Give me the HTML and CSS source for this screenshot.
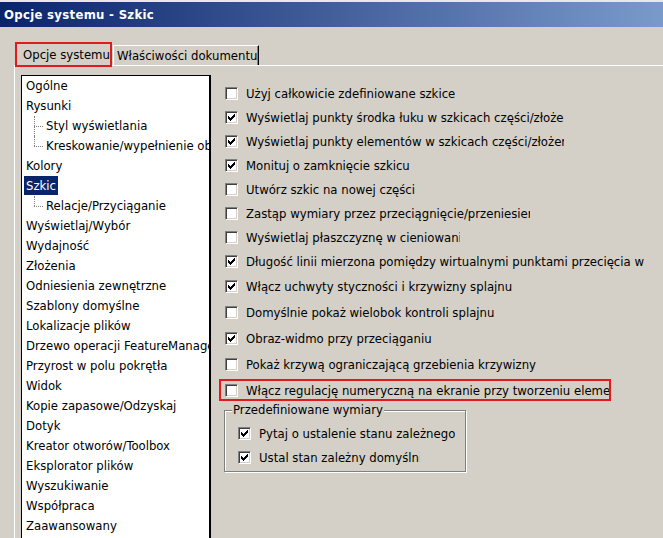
FILE: index.html
```html
<!DOCTYPE html>
<html lang="pl">
<head>
    <meta charset="UTF-8">
    <title>Opcje systemu - Szkic</title>
    <link rel="stylesheet" href="styles.css">
</head>
<body>
<div class="window">
    <div class="titlebar">Opcje systemu - Szkic</div>
    <div class="content">
        <div class="tabs">
            <div class="tab active">Opcje systemu</div>
            <div class="tab">Właściwości dokumentu</div>
        </div>
        <div class="panel">
            <ul class="tree">
                <li><span>Ogólne</span></li>
                <li><span>Rysunki</span></li>
                <li class="sub"><span>Styl wyświetlania</span></li>
                <li class="sub last"><span>Kreskowanie/wypełnienie obszaru</span></li>
                <li><span>Kolory</span></li>
                <li class="selected"><span>Szkic</span></li>
                <li class="sub last"><span>Relacje/Przyciąganie</span></li>
                <li><span>Wyświetlaj/Wybór</span></li>
                <li><span>Wydajność</span></li>
                <li><span>Złożenia</span></li>
                <li><span>Odniesienia zewnętrzne</span></li>
                <li><span>Szablony domyślne</span></li>
                <li><span>Lokalizacje plików</span></li>
                <li><span>Drzewo operacji FeatureManager</span></li>
                <li><span>Przyrost w polu pokrętła</span></li>
                <li><span>Widok</span></li>
                <li><span>Kopie zapasowe/Odzyskaj</span></li>
                <li><span>Dotyk</span></li>
                <li><span>Kreator otworów/Toolbox</span></li>
                <li><span>Eksplorator plików</span></li>
                <li><span>Wyszukiwanie</span></li>
                <li><span>Współpraca</span></li>
                <li><span>Zaawansowany</span></li>
            </ul>

            <div class="options">
                <div class="checks">
                    <div class="check"><span class="box"></span><span class="label">Użyj całkowicie zdefiniowane szkice</span></div>
                    <div class="check"><span class="box"><svg class="tick" viewBox="0 0 7 7"><path d="M0 2h1v3H0zM1 3h1v3H1zM2 4h1v3H2zM3 3h1v3H3zM4 2h1v3H4zM5 1h1v3H5zM6 0h1v3H6z"/></svg></span><span class="label cut-318">Wyświetlaj punkty środka łuku w szkicach części/złożeniach</span></div>
                    <div class="check"><span class="box"><svg class="tick" viewBox="0 0 7 7"><path d="M0 2h1v3H0zM1 3h1v3H1zM2 4h1v3H2zM3 3h1v3H3zM4 2h1v3H4zM5 1h1v3H5zM6 0h1v3H6z"/></svg></span><span class="label cut-318">Wyświetlaj punkty elementów w szkicach części/złożeniach</span></div>
                    <div class="check"><span class="box"><svg class="tick" viewBox="0 0 7 7"><path d="M0 2h1v3H0zM1 3h1v3H1zM2 4h1v3H2zM3 3h1v3H3zM4 2h1v3H4zM5 1h1v3H5zM6 0h1v3H6z"/></svg></span><span class="label">Monituj o zamknięcie szkicu</span></div>
                    <div class="check"><span class="box"></span><span class="label">Utwórz szkic na nowej części</span></div>
                    <div class="check"><span class="box"></span><span class="label cut-284">Zastąp wymiary przez przeciągnięcie/przeniesienie</span></div>
                    <div class="check"><span class="box"></span><span class="label cut-214">Wyświetlaj płaszczyznę w cieniowaniu</span></div>
                    <div class="check"><span class="box"><svg class="tick" viewBox="0 0 7 7"><path d="M0 2h1v3H0zM1 3h1v3H1zM2 4h1v3H2zM3 3h1v3H3zM4 2h1v3H4zM5 1h1v3H5zM6 0h1v3H6z"/></svg></span><span class="label">Długość linii mierzona pomiędzy wirtualnymi punktami przecięcia w</span></div>
                </div>
                <div class="checks loose">
                    <div class="check"><span class="box"><svg class="tick" viewBox="0 0 7 7"><path d="M0 2h1v3H0zM1 3h1v3H1zM2 4h1v3H2zM3 3h1v3H3zM4 2h1v3H4zM5 1h1v3H5zM6 0h1v3H6z"/></svg></span><span class="label">Włącz uchwyty styczności i krzywizny splajnu</span></div>
                    <div class="check"><span class="box"></span><span class="label">Domyślnie pokaż wielobok kontroli splajnu</span></div>
                    <div class="check"><span class="box"><svg class="tick" viewBox="0 0 7 7"><path d="M0 2h1v3H0zM1 3h1v3H1zM2 4h1v3H2zM3 3h1v3H3zM4 2h1v3H4zM5 1h1v3H5zM6 0h1v3H6z"/></svg></span><span class="label">Obraz-widmo przy przeciąganiu</span></div>
                    <div class="check"><span class="box"></span><span class="label">Pokaż krzywą ograniczającą grzebienia krzywizny</span></div>
                    <div class="check marked"><span class="box"></span><span class="label">Włącz regulację numeryczną na ekranie przy tworzeniu elementów</span></div>
                </div>

                <div class="group">
                    <div class="legend">Przedefiniowane wymiary</div>
                    <div class="check"><span class="box"><svg class="tick" viewBox="0 0 7 7"><path d="M0 2h1v3H0zM1 3h1v3H1zM2 4h1v3H2zM3 3h1v3H3zM4 2h1v3H4zM5 1h1v3H5zM6 0h1v3H6z"/></svg></span><span class="label">Pytaj o ustalenie stanu zależnego</span></div>
                    <div class="check"><span class="box"><svg class="tick" viewBox="0 0 7 7"><path d="M0 2h1v3H0zM1 3h1v3H1zM2 4h1v3H2zM3 3h1v3H3zM4 2h1v3H4zM5 1h1v3H5zM6 0h1v3H6z"/></svg></span><span class="label cut-161">Ustal stan zależny domyślnie</span></div>
                </div>
            </div>
        </div>
    </div>
</div>
</body>
</html>
```

FILE: styles.css
```css
body {
    margin: 0;
    background: #d4d0c8;
    font-family: "DejaVu Sans Condensed", "DejaVu Sans", sans-serif;
    font-size: 13px;
    color: #000;
    overflow: hidden;
}
.window {
    width: 663px;
    height: 538px;
    overflow: hidden;
    border-top: 2px solid #eae8e3;
    box-sizing: border-box;
}
.titlebar {
    height: 25px;
    line-height: 25px;
    padding-left: 4px;
    background: linear-gradient(to right, #0a246a, #7a9acb);
    color: #fff;
    font-weight: bold;
    letter-spacing: 0.3px;
}
.content {
    padding: 15px 0 0 14px;
}

/* tabs */
.tabs {
    display: flex;
    align-items: flex-end;
    height: 23px;
}
.tab {
    box-sizing: border-box;
    height: 20px;
    line-height: 19px;
    margin-left: 1px;
    padding-left: 3px;
    width: 146px;
    border-top: 1px solid #fff;
    border-left: 1px solid #fff;
    border-right: 1px solid #000;
    box-shadow: inset -1px 0 0 #808080;
    white-space: nowrap;
}
.tab.active {
    position: relative;
    z-index: 1;
    width: 97px;
    height: 25px;
    line-height: 21px;
    margin-bottom: -2px;
    padding-left: 6px;
    border: 2px solid #e01b1b;
    box-shadow: none;
    background: #d4d0c8;
}

.panel {
    display: flex;
    align-items: flex-start;
    border-top: 1px solid #fff;
    border-left: 1px solid #fff;
    padding: 9px 0 0 6px;
}

/* tree list */
.tree {
    list-style: none;
    margin: 0;
    padding: 0;
    width: 190px;
    height: 475px;
    box-sizing: border-box;
    border: 1px solid #000;
    border-right-width: 2px;
    background: #fff;
    overflow: hidden;
    flex: none;
}
.tree li {
    height: 20px;
    line-height: 20px;
    padding-left: 2px;
    white-space: nowrap;
}
.tree li span {
    display: inline-block;
    padding: 0 2px;
    line-height: 19px;
}
.tree .selected span {
    background: #0a246a;
    color: #fff;
}
.tree .sub {
    position: relative;
    padding-left: 22px;
}
.tree .sub::before {
    content: "";
    position: absolute;
    left: 12px;
    top: 10px;
    width: 9px;
    border-top: 1px dotted #808080;
}
.tree .sub::after {
    content: "";
    position: absolute;
    left: 12px;
    top: 0;
    height: 20px;
    border-left: 1px dotted #808080;
}
.tree .sub.last::after {
    height: 10px;
}

/* check boxes */
.options {
    padding: 6px 0 0 14px;
    flex: 1;
    min-width: 0;
}
.check {
    display: flex;
    align-items: center;
    gap: 8px;
    height: 24px;
}
.loose .check {
    height: 26px;
}
.box {
    display: flex;
    align-items: center;
    justify-content: center;
    flex: none;
    width: 13px;
    height: 13px;
    box-sizing: border-box;
    background: #fff;
    border: 1px solid;
    border-color: #808080 #fff #fff #808080;
    box-shadow: inset 1px 1px 0 #404040, inset -1px -1px 0 #d4d0c8;
}
.tick {
    width: 7px;
    height: 7px;
    fill: #000;
    shape-rendering: crispEdges;
}
.label {
    white-space: nowrap;
    overflow: hidden;
}
.cut-318 { width: 318px; flex: none; }
.cut-284 { width: 284px; flex: none; }
.cut-214 { width: 214px; flex: none; }
.cut-161 { width: 161px; flex: none; }

.loose .marked {
    height: 22px;
    width: 392px;
    box-sizing: border-box;
    margin: 2px 0 2px -6px;
    padding-left: 4px;
    border: 2px solid #e01b1b;
}

/* group box */
.group {
    width: 242px;
    height: 62px;
    box-sizing: border-box;
    margin: 9px 0 0 -1px;
    padding-left: 13px;
    border: 1px solid #808080;
    box-shadow: 1px 1px 0 #fff, inset 1px 1px 0 #fff;
}
.legend {
    display: table;
    margin: -8px 0 4px -6px;
    padding: 0 1px;
    line-height: 14px;
    background: #d4d0c8;
}
```
